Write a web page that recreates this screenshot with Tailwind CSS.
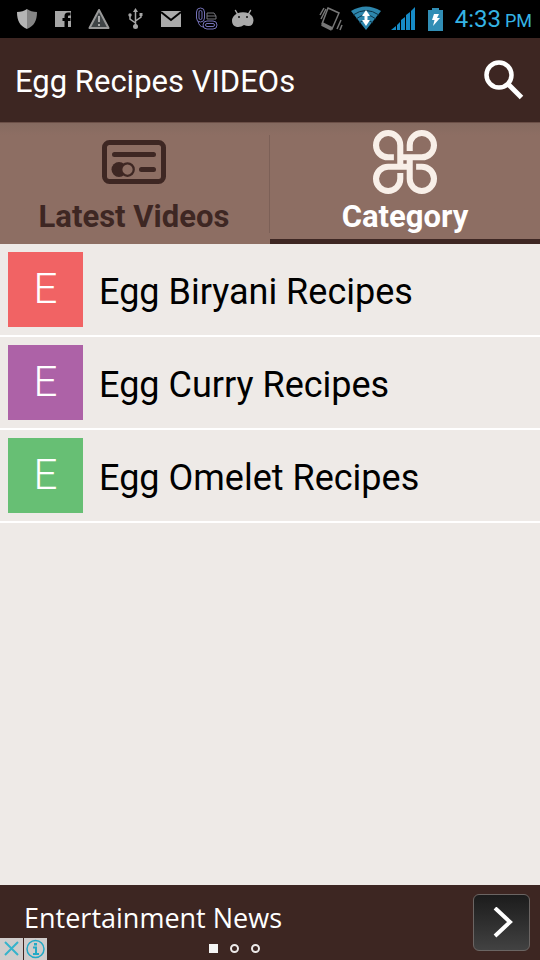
<!DOCTYPE html>
<html lang="en">
<head>
<meta charset="utf-8">
<meta name="viewport" content="width=device-width, initial-scale=1">
<title>Egg Recipes VIDEOs</title>
<script src="https://cdn.jsdelivr.net/npm/@tailwindcss/browser@4"></script>
</head>
<body class="flex min-h-screen flex-col bg-[#eeeae7] font-[Roboto,sans-serif]">
<div class="flex h-[38px] items-center justify-between bg-black pl-4 pr-2">
  <div class="flex items-center gap-3 text-[#a6a6a6]">
    <svg class="size-6" viewBox="0 0 24 24"><path d="M11 2Q7 5 1 5C1 14 4 19 11 22Z" fill="#b5b5b5"/><path d="M11 2Q15 5 21 5C21 14 18 19 11 22Z" fill="#858585"/></svg>
    <svg class="size-6" viewBox="0 0 24 24" fill="currentColor"><path d="M3 4H19V20H16V14H18.500V11H16V9.500Q16 8.500 17 8.500H18.500V5.500H16Q12.500 5.500 12.500 9V11H10.500V14H12.500V20H3Z"/></svg>
    <svg class="size-6" viewBox="0 0 24 24"><path d="M11 3L20.500 21H1.500Z" fill="#3f4446" stroke="#999" stroke-width="2" stroke-linejoin="round"/><path d="M11 9V15M11 17V19" stroke="#aaa" stroke-width="2"/></svg>
    <svg class="size-6" viewBox="0 0 24 24" fill="none" stroke="currentColor" stroke-width="1.500"><path d="M11.500 20V4M6 8V12L11.500 16M17 8V10L11.500 14"/><path d="M9 5L11.500 1L14 5ZM15.500 6H18.500V9H15.500Z" fill="currentColor" stroke="none"/><circle cx="6" cy="8" r="1.700" fill="currentColor" stroke="none"/><circle cx="11.500" cy="19.500" r="2.500" fill="currentColor" stroke="none"/></svg>
    <svg class="size-6" viewBox="0 0 24 24"><path d="M1 4H21V20H1Z" fill="#aaa"/><path d="M1 5L11 13L21 5" fill="none" stroke="#000" stroke-width="2"/></svg>
    <svg class="size-6" viewBox="0 0 24 24" fill="none"><g stroke="#7471b8" stroke-width="1"><rect x=".5" y="1" width="8" height="14" rx="4"/><rect x="3" y="3.500" width="3" height="9" rx="1.500"/><rect x="7" y="14" width="14" height="8" rx="4"/><rect x="9.500" y="16.500" width="9" height="3" rx="1.500"/><path d="M2 14Q3 20 8 20"/></g><path d="M11 6H18L20 9V12H11ZM11 9H20" stroke="#77777c"/></svg>
    <svg class="size-6" viewBox="0 0 24 24"><path d="M3.500 3.500L5.500 7M18.500 3.500L16.500 7" stroke="#aaa" stroke-width="1.500" stroke-linecap="round"/><path d="M5 6.500Q11 4 17 6.500Q21.500 9 21.500 13.500Q21 19 16.500 19Q14 19 12 18Q9 20.500 5 20Q0 19 0 14Q0 9 5 6.500Z" fill="#aaa"/><circle cx="7" cy="10" r="1" fill="#111"/><circle cx="15" cy="10" r="1" fill="#111"/></svg>
  </div>
  <div class="flex items-center text-[#35b4e4]">
    <svg class="mr-2 h-7 w-6" viewBox="0 0 24 28" fill="none" stroke="#777" stroke-width="1.500"><path d="M9 3L20 8L13 24L3 19Z"/><path d="M3 19L13 24" stroke-width="4"/><path d="M1 10L5 3M2 14L7 4M18 24L22 15M21 25L23 20"/></svg>
    <svg class="mr-2 h-7 w-8" viewBox="0 0 32 28" fill="none"><path d="M0 6Q15 -3 30 6L15 25Z" fill="#2d86ad"/><path d="M2 10Q15 1 28 10M5 14Q15 6 25 14M8 18Q15 12 22 18" stroke="#0b3245" stroke-width="1"/><path d="M15 5L19 11H11ZM11 15H19L15 21ZM13.500 10H16.500V16H13.500Z" fill="#fff"/></svg>
    <svg class="mr-3 h-7 w-6" viewBox="0 0 24 28" fill="#168bc7"><path d="M0 25L5 21V25ZM6 20L9 17V25H6ZM10 15L14 12V25H10ZM15 10L19 7V25H15ZM20 6L24 2V25H20Z"/></svg>
    <svg class="mr-2 h-7 w-5" viewBox="0 0 20 28"><path d="M1 5H5V3H12V5H16V26H1Z" fill="#318eb5"/><path d="M7 9H12L10 13H13L6 21L7.500 15H5Z" fill="#fff"/></svg>
    <span class="text-2xl">4:33</span><span class="ml-1 pt-1 text-lg">PM</span>
  </div>
</div>
<header class="flex h-[84px] items-center justify-between bg-[#3d2622] pl-[15px] pr-4 text-white">
  <h1 class="pt-1 text-[31px] leading-9">Egg Recipes VIDEOs</h1>
  <button type="button" aria-label="Search"><svg class="size-10" viewBox="0 0 40 40" fill="none" stroke="#fff"><circle cx="15" cy="15" r="12.500" stroke-width="4.500"/><path d="M24 24L37.500 37.500" stroke-width="5"/></svg></button>
</header>
<nav class="grid h-[122px] grid-cols-2 border-t border-[#6b4f47] bg-linear-to-b from-[#856a60] to-[#8d6e63] to-10% text-[31px] leading-9 font-bold">
  <a href="#latest" class="relative flex flex-col items-center pr-[2px] text-[#3e2723]">
    <svg class="mt-[7px] size-16" viewBox="0 0 64 64" fill="none" stroke="currentColor" stroke-linecap="round"><rect x="2.500" y="12.500" width="59" height="39" rx="5" stroke-width="5"/><path d="M12.500 24.500H51.500M39.500 39.500H51.500" stroke-width="5"/><circle cx="17" cy="39.500" r="7.500" fill="currentColor" stroke="none"/><circle cx="25.500" cy="39.500" r="6.250" fill="#8d6e63" stroke-width="2.250"/></svg>
    <span class="mt-[5px]">Latest Videos</span>
    <span class="absolute right-0 top-3 h-[98px] w-px bg-[#7c6057]"></span>
  </a>
  <a href="#category" aria-current="page" class="flex flex-col items-center border-b-5 border-[#3e2723] text-white">
    <svg class="mt-[7px] size-16" viewBox="0 0 190 190" fill="none" stroke="#f8efe8" stroke-width="18"><path d="M62 81H45A36 36 0 1 1 81 45V109M109 62V45A36 36 0 1 1 145 81H81M128 109H145A36 36 0 1 1 109 145V81M81 128V145A36 36 0 1 1 45 109H109"/></svg>
    <span class="mt-[5px]">Category</span>
  </a>
</nav>
<main class="grow">
  <ul class="text-4xl text-black">
    <li class="border-b-2 border-white"><a href="#biryani" class="flex items-center gap-4 p-2"><span class="flex size-[75px] items-center justify-center bg-[#f16364] text-[42px] font-light text-white">E</span><span class="pt-1">Egg Biryani Recipes</span></a></li>
    <li class="border-b-2 border-white"><a href="#curry" class="flex items-center gap-4 p-2"><span class="flex size-[75px] items-center justify-center bg-[#ad62a7] text-[42px] font-light text-white">E</span><span class="pt-1">Egg Curry Recipes</span></a></li>
    <li class="border-b-2 border-white"><a href="#omelet" class="flex items-center gap-4 p-2"><span class="flex size-[75px] items-center justify-center bg-[#67bf74] text-[42px] font-light text-white">E</span><span class="pt-1">Egg Omelet Recipes</span></a></li>
  </ul>
</main>
<footer class="relative flex h-[75px] items-start justify-between bg-[#3d2622] pl-6 pr-[10px] pt-[9px] text-white">
  <a href="#news" class="pt-1 font-['Open_Sans',sans-serif] text-[27px] leading-10">Entertainment News</a>
  <button type="button" aria-label="Next" class="flex size-[57px] items-center justify-center rounded-md border border-[#6b6563] bg-linear-to-b from-[#1c1c1c] to-[#424242]"><svg class="size-8" viewBox="0 0 32 32" fill="none" stroke="#fff" stroke-width="4"><path d="M9 1L24 15L9 29"/></svg></button>
  <div class="absolute bottom-0 left-0 flex gap-px">
    <button type="button" aria-label="Close ad" class="bg-[#d0cccb]"><svg class="h-[22px] w-[23px]" viewBox="0 0 23 22" fill="none" stroke="#36b3cb" stroke-width="2"><path d="M5 4L18 17M18 4L5 17"/></svg></button>
    <button type="button" aria-label="Ad information" class="bg-[#d0cccb]"><svg class="h-[22px] w-[23px]" viewBox="0 0 23 22" fill="none" stroke="#22a9c6"><circle cx="11.500" cy="11" r="8.500" stroke-width="1.500"/><path d="M9 9.500H12V16M9 16H15" stroke-width="2"/><path d="M11.500 5V7.500" stroke-width="3"/></svg></button>
  </div>
  <div class="absolute bottom-[7px] left-[209px] flex items-center gap-3"><span class="size-[9px] bg-[#f5f5f5]"></span><span class="size-[9px] rounded-full border-2 border-white/90"></span><span class="size-[9px] rounded-full border-2 border-white/90"></span></div>
</footer>
</body>
</html>
